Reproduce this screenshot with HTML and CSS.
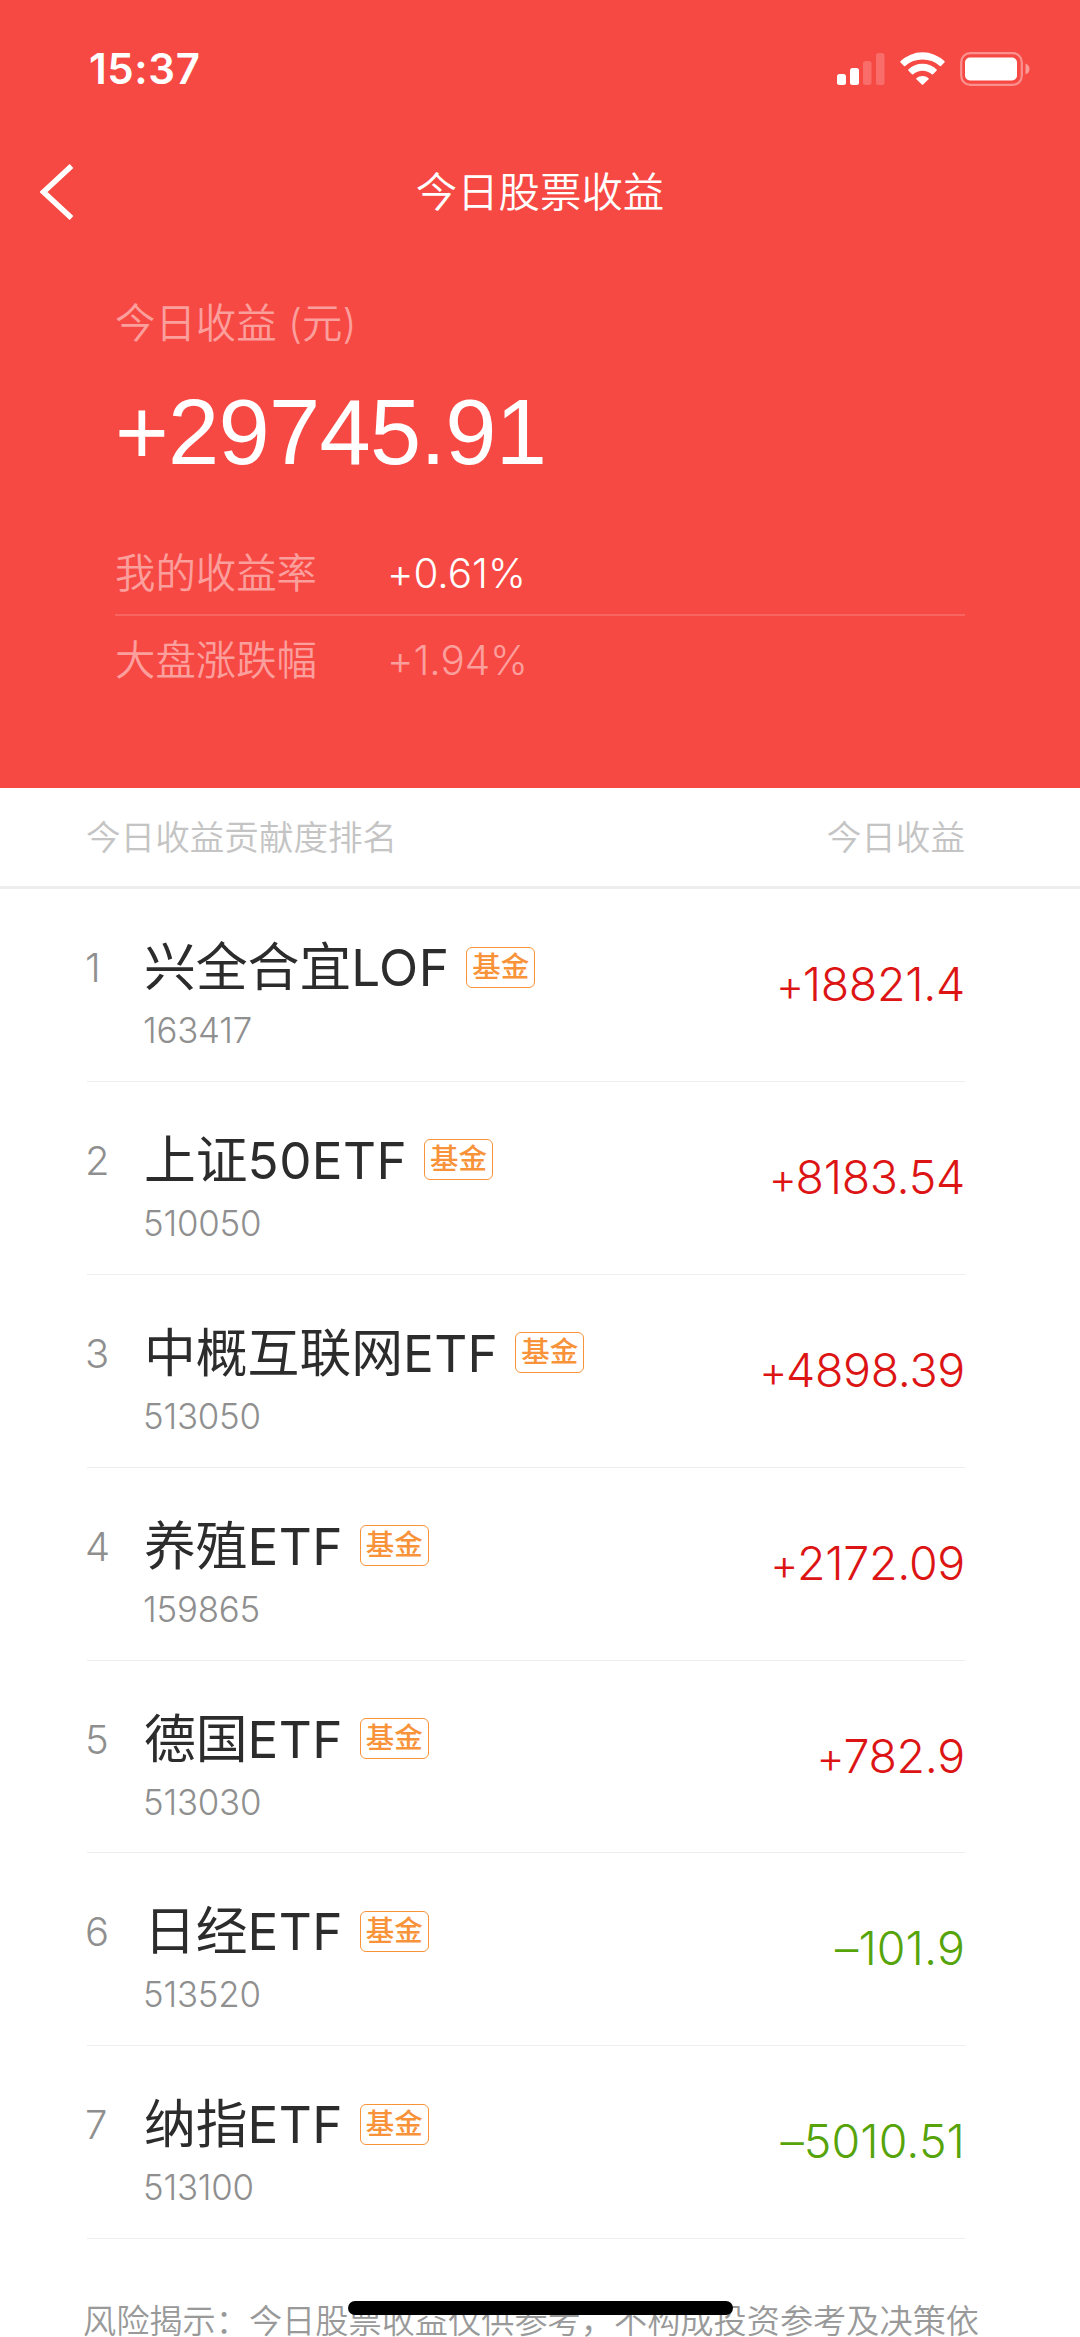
FILE: index.html
```
<!DOCTYPE html>
<html lang="zh-CN">
<head>
<meta charset="utf-8">
<title>今日股票收益</title>
<link rel="stylesheet" href="styles.css">
</head>
<body>
<div class="screen">
  <header class="hero">
    <div class="status">
      <span class="time">15:37</span>
      <div class="status-icons">
        <svg class="signal" viewBox="0 0 48 32" width="48" height="32">
          <rect x="0" y="21" width="9" height="11" rx="2.5"/>
          <rect x="13" y="15" width="9" height="17" rx="2.5"/>
          <g opacity=".2"><rect x="26" y="8" width="8.5" height="24" rx="2.5"/><rect x="39" y="0" width="8.5" height="32" rx="2.5"/></g>
        </svg>
        <svg class="wifi" viewBox="0 0 45 33" width="45" height="33">
          <path d="M0.4 9.2 Q0 9.9.6 10.5L4 14Q4.6 14.5 5.2 14A26 26 0 0 1 39.8 14Q40.4 14.5 41 14L44.4 10.5Q45 9.9 44.6 9.2A32 32 0 0 0 .4 9.2Z"/>
          <path d="M8.3 17.5Q8 18.2 8.5 18.7L12 22.2Q12.6 22.7 13.2 22.2A14 14 0 0 1 31.8 22.2Q32.4 22.7 33 22.2L36.5 18.7Q37 18.2 36.7 17.5A20.5 20.5 0 0 0 8.3 17.5Z"/>
          <path d="M16.3 26.2Q16 26.7 16.5 27.2L21.8 32.5Q22.5 33.1 23.2 32.5L28.5 27.2Q29 26.7 28.7 26.2A9.5 9.5 0 0 0 16.3 26.2Z"/>
        </svg>
        <svg class="battery" viewBox="0 0 70 34" width="70" height="34">
          <rect x="1.2" y="1.2" width="60.6" height="31.6" rx="9" fill="none" stroke="#fff" stroke-width="2.2" opacity=".4"/>
          <rect x="5" y="5.5" width="52" height="23" rx="5"/>
          <path d="M65.5 11.5Q69.5 13 69.5 17T65.5 22.5Z" opacity=".45"/>
        </svg>
      </div>
    </div>
    <nav class="nav">
      <svg class="back" viewBox="0 0 34 56" width="34" height="56"><path d="M31.5 2L3.5 28L31.5 54" fill="none" stroke="#fff" stroke-width="5.5"/></svg>
      <h1 class="title">今日股票收益</h1>
    </nav>
    <section class="summary">
      <div class="label">今日收益 (元)</div>
      <div class="total">+29745.91</div>
      <div class="rate mine"><span class="rate-name">我的收益率</span><span class="rate-value">+0.61%</span></div>
      <div class="rate market"><span class="rate-name">大盘涨跌幅</span><span class="rate-value">+1.94%</span></div>
    </section>
  </header>
  <div class="list-head"><span>今日收益贡献度排名</span><span>今日收益</span></div>
  <main class="list">
    <div class="item"><span class="rank">1</span><div class="stock"><div class="name">兴全合宜<span class="latin">LOF</span><span class="tag">基金</span></div><div class="code">163417</div></div><span class="gain"><span class="sign">+</span>18821.4</span></div>
    <div class="item"><span class="rank">2</span><div class="stock"><div class="name">上证<span class="latin">50ETF</span><span class="tag">基金</span></div><div class="code">510050</div></div><span class="gain"><span class="sign">+</span>8183.54</span></div>
    <div class="item"><span class="rank">3</span><div class="stock"><div class="name">中概互联网<span class="latin">ETF</span><span class="tag">基金</span></div><div class="code">513050</div></div><span class="gain"><span class="sign">+</span>4898.39</span></div>
    <div class="item"><span class="rank">4</span><div class="stock"><div class="name">养殖<span class="latin">ETF</span><span class="tag">基金</span></div><div class="code">159865</div></div><span class="gain"><span class="sign">+</span>2172.09</span></div>
    <div class="item"><span class="rank">5</span><div class="stock"><div class="name">德国<span class="latin">ETF</span><span class="tag">基金</span></div><div class="code">513030</div></div><span class="gain"><span class="sign">+</span>782.9</span></div>
    <div class="item"><span class="rank">6</span><div class="stock"><div class="name">日经<span class="latin">ETF</span><span class="tag">基金</span></div><div class="code">513520</div></div><span class="gain loss">–101.9</span></div>
    <div class="item"><span class="rank">7</span><div class="stock"><div class="name">纳指<span class="latin">ETF</span><span class="tag">基金</span></div><div class="code">513100</div></div><span class="gain loss">–5010.51</span></div>
  </main>
  <footer class="notice">风险揭示：今日股票收益仅供参考，不构成投资参考及决策依</footer>
  <div class="home-indicator"></div>
</div>
</body>
</html>
```
FILE: styles.css
```
* { box-sizing: border-box; }

body {
  margin: 0;
  background: #fff;
  font-family: Inter, "Noto Sans CJK SC", sans-serif;
  font-weight: 350;
}

.screen {
  position: relative;
  width: 1080px;
  height: 2337px;
  overflow: hidden;
  white-space: nowrap;
}

.hero {
  height: 788px;
  background: #f74944;
  color: #fff;
}

.status {
  display: flex;
  justify-content: space-between;
  height: 137px;
  padding: 0 50px 0 89px;
}

.time {
  font-size: 42px;
  font-weight: 600;
  line-height: 138px;
  letter-spacing: .6px;
}

.status-icons {
  display: flex;
  align-items: center;
  gap: 15px;
  fill: #fff;
}

.nav {
  display: grid;
  grid-template-columns: 1fr auto 1fr;
  align-items: center;
  height: 110px;
  padding: 0 40px;
}

.title {
  margin: 0;
  font-size: 41.4px;
  font-weight: 350;
  line-height: 110px;
}

.summary { padding: 46px 115px 0; }

.label {
  height: 60px;
  font-size: 40.4px;
  line-height: 61px;
  color: #fb9f9d;
}

.total {
  height: 157px;
  font-family: "Liberation Sans", sans-serif;
  font-size: 92px;
  font-weight: 400;
  line-height: 158px;
  letter-spacing: -.7px;
}

.rate {
  display: flex;
  height: 87px;
  font-size: 40.4px;
  line-height: 89px;
}

.mine {
  height: 106px;
  padding-top: 19px;
  border-bottom: 2px solid #f86561;
}

.rate-name {
  width: 272px;
  color: #fb9f9d;
}

.rate-value {
  font-weight: 300;
  font-feature-settings: "calt" 0;
}

.market { color: #fb9f9d; }

.list-head {
  display: flex;
  justify-content: space-between;
  height: 101px;
  padding: 0 115px 0 86px;
  border-bottom: 3px solid #eee;
  font-size: 34.6px;
  line-height: 98px;
  color: #c4c4c4;
}

.list { padding: 0 115px 0 87px; }

.item {
  display: flex;
  height: 192.9px;
  border-bottom: 1px solid #eee;
}

.rank {
  width: 57px;
  font-size: 40px;
  font-weight: 300;
  line-height: 158px;
  text-indent: -2px;
  color: #8f8f8f;
}

.stock {
  flex: 1;
  padding-top: 43px;
}

.name {
  display: flex;
  align-items: center;
  height: 70px;
  font-size: 51.8px;
  font-weight: 400;
  line-height: 70px;
  color: #2c2c2c;
}

.latin {
  font-size: 51.2px;
  letter-spacing: .4px;
}

.tag {
  width: 69px;
  height: 41px;
  margin-left: 17px;
  border: 1.5px solid #f8933a;
  border-radius: 6px;
  font-size: 28.5px;
  font-weight: 500;
  line-height: 38px;
  text-align: center;
  color: #f8933a;
}

.code {
  font-size: 34.8px;
  font-weight: 300;
  line-height: 57px;
  letter-spacing: -.2px;
  text-indent: -1px;
  color: #8f8f8f;
}

.gain {
  font-size: 46.5px;
  font-weight: 300;
  line-height: 190px;
  letter-spacing: -.3px;
  font-feature-settings: "calt" 0;
  color: #dc1414;
}

.sign {
  margin-right: -1px;
  font-size: 43px;
}

.loss {
  letter-spacing: .1px;
  color: #56a30a;
}

.notice {
  padding: 52px 0 0 83px;
  font-size: 33.2px;
  line-height: 60px;
  color: #999;
}

.home-indicator {
  position: absolute;
  left: 348px;
  top: 2301px;
  width: 385px;
  height: 14px;
  border-radius: 7px;
  background: #000;
}
```
